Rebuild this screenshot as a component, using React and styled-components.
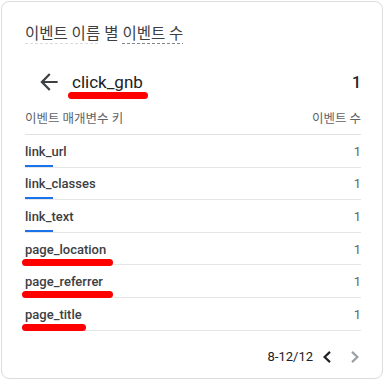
import React from "react";
import styled, { createGlobalStyle } from "styled-components";

const Global = createGlobalStyle`
  html, body { margin: 0; padding: 0; background: #fff; }
  body { font-family: Roboto, "Noto Sans CJK KR", sans-serif; -webkit-font-smoothing: antialiased; }
`;

const Card = styled.div`
  box-sizing: border-box;
  margin: 1px 0 0 1px;
  width: 382px;
  height: 378px;
  border: 1px solid #dadce0;
  border-radius: 8px;
  padding: 23px 21px 0 23px;
  display: flex;
  flex-direction: column;
  color: #202124;
`;

const Title = styled.div`
  display: flex;
  align-items: flex-start;
  font-size: 15.5px;
  line-height: 18px;
  height: 19px;
  color: #3c4043;
`;

const Dashed = styled.span`
  display: block;
  padding-bottom: 1px;
  background: repeating-linear-gradient(to right, ${(p) => p.$c} 0 3px, transparent 3px 5px) left bottom / 100% 1px no-repeat;
`;

const Plain = styled.span`
  display: block;
  margin: 0 4px;
`;

const HeaderRow = styled.div`
  display: flex;
  align-items: center;
  height: 32px;
  margin-top: 22px;
`;

const BackButton = styled.button`
  all: unset;
  display: flex;
  width: 26px;
  height: 26px;
  margin-left: 11px;
  color: #3c4043;
`;

const EventName = styled.div`
  position: relative;
  flex: 1;
  margin-left: 10px;
  font-size: 17px;
  font-weight: 400;
  line-height: 20px;
  color: #202124;
`;

const Redact = styled.span`
  position: absolute;
  left: ${(p) => p.$left}px;
  top: ${(p) => p.$top}px;
  width: ${(p) => p.$w}px;
  height: 7px;
  border-radius: 4px;
  background: #ff0000;
`;

const Total = styled.div`
  font-size: 16px;
  font-weight: 500;
  color: #202124;
`;

const ColHeader = styled.div`
  box-sizing: border-box;
  display: flex;
  justify-content: space-between;
  align-items: center;
  height: 34px;
  margin-top: 3px;
  border-bottom: 1px solid #e0e0e0;
  font-size: 12.5px;
  color: #5f6368;
`;

const Row = styled.div`
  position: relative;
  box-sizing: border-box;
  display: flex;
  justify-content: space-between;
  height: 32.6px;
  border-bottom: 1px solid #e6e6e6;
  &:last-child { border-bottom: none; }
`;

const KeyCell = styled.div`
  position: relative;
  display: flex;
  flex-direction: column;
`;

const KeyText = styled.div`
  flex: 1;
  display: flex;
  align-items: center;
  padding-top: 3px;
  font-size: 13px;
  font-weight: 500;
  color: #3c4043;
`;

const Bar = styled.div`
  height: 2px;
  background: #1a73e8;
`;

const Value = styled.div`
  display: flex;
  align-items: center;
  padding-top: 1px;
  font-size: 13px;
  color: #5f6368;
`;

const Pagination = styled.div`
  display: flex;
  justify-content: flex-end;
  align-items: center;
  height: 24px;
  margin-top: 14px;
  font-size: 13px;
  color: #202124;
`;

const PageLabel = styled.span`
  margin-right: 4px;
`;

const PageButton = styled.button`
  all: unset;
  display: flex;
  align-items: center;
  justify-content: center;
  width: 20px;
  height: 24px;
  color: ${(p) => (p.$disabled ? "#9aa0a6" : "#202124")};
  &:last-child { margin-left: 8px; margin-right: -4px; }
`;

const ArrowBack = () => (
  <svg width="26" height="26" viewBox="0 0 24 24" fill="currentColor">
    <path d="M20 11H7.83l5.59-5.59L12 4l-8 8 8 8 1.41-1.41L7.83 13H20v-2z" />
  </svg>
);

const Chevron = ({ dir }) => (
  <svg width="14" height="14" viewBox="0 0 14 14" fill="none" stroke="currentColor" strokeWidth="2.2" strokeLinecap="square">
    {dir === "left" ? <polyline points="9.2,2.6 4.6,7 9.2,11.4" /> : <polyline points="4.8,2.6 9.4,7 4.8,11.4" />}
  </svg>
);

const rows = [
  { key: "link_url", value: 1 },
  { key: "link_classes", value: 1 },
  { key: "link_text", value: 1 },
  { key: "page_location", value: 1, redact: 91 },
  { key: "page_referrer", value: 1, redact: 91 },
  { key: "page_title", value: 1, redact: 64 },
];

export default function App() {
  const maxValue = Math.max(...rows.map((r) => r.value));
  return (
    <>
      <Global />
      <Card>
        <Title>
          <Dashed $c="#dadce0">이벤트 이름</Dashed>
          <Plain>별</Plain>
          <Dashed $c="#80868b">이벤트 수</Dashed>
        </Title>
        <HeaderRow>
          <BackButton aria-label="back">
            <ArrowBack />
          </BackButton>
          <EventName>
            click_gnb
            <Redact $left={-4} $top={20} $w={80} />
          </EventName>
          <Total>1</Total>
        </HeaderRow>
        <ColHeader>
          <span>이벤트 매개변수 키</span>
          <span>이벤트 수</span>
        </ColHeader>
        {rows.map((r) => (
          <Row key={r.key}>
            <KeyCell>
              <KeyText>{r.key}</KeyText>
              <Bar style={{ width: `${(r.value / maxValue) * 28}px` }} />
            </KeyCell>
            <Value>{r.value}</Value>
            {r.redact && <Redact $left={-3} $top={26} $w={r.redact} />}
          </Row>
        ))}
        <Pagination>
          <PageLabel>8-12/12</PageLabel>
          <PageButton aria-label="previous">
            <Chevron dir="left" />
          </PageButton>
          <PageButton $disabled aria-label="next">
            <Chevron dir="right" />
          </PageButton>
        </Pagination>
      </Card>
    </>
  );
}
